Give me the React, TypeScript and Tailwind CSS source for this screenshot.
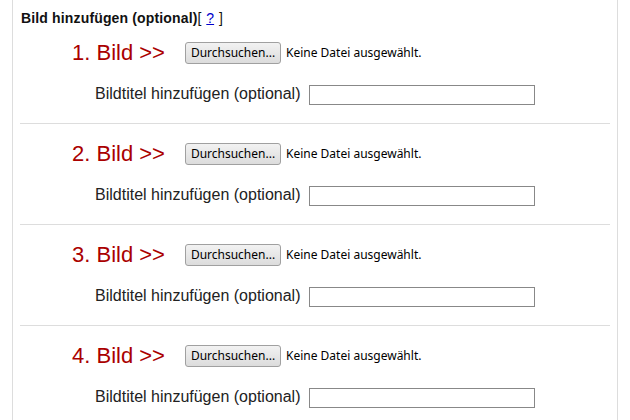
import React from "react";

function Section({ n, first }: { n: number; first?: boolean }) {
  return (
    <div className={`mx-[7px] border-b border-[#dddddd] ${first ? "pt-[18px]" : "pt-[19px]"} pb-[18px]`}>
      <div className="flex h-[22px] items-center pl-[52px]">
        <span className="w-[113px] text-[22px] leading-none text-[#aa0000]" style={{ fontFamily: "Arial, 'Liberation Sans', sans-serif" }}>
          {n}. Bild &gt;&gt;
        </span>
        <button
          type="button"
          className="h-[22px] w-[96px] rounded-[3px] border border-[#a0a0a0] bg-gradient-to-b from-[#f2f2f2] to-[#dcdcdc] text-[12px] text-black leading-none"
          style={{ fontFamily: "'Noto Sans', 'DejaVu Sans', sans-serif" }}
        >
          Durchsuchen...
        </button>
        <span className="ml-[5px] text-[12px] text-black" style={{ fontFamily: "'Noto Sans', 'DejaVu Sans', sans-serif" }}>
          Keine Datei ausgewählt.
        </span>
      </div>
      <div className="mt-[19px] flex h-[22px] items-center pl-[75px]">
        <span className="text-[16px] leading-none text-[#222222]" style={{ fontFamily: "Arial, 'Liberation Sans', sans-serif" }}>
          Bildtitel hinzufügen (optional)
        </span>
        <input type="text" className="ml-[9px] mt-[1px] h-[20px] w-[226px] border border-[#888888] bg-white" />
      </div>
    </div>
  );
}

export default function App() {
  return (
    <div className="h-[420px] w-[630px] bg-white" style={{ fontFamily: "Arial, 'Liberation Sans', sans-serif" }}>
      <div className="ml-[12px] h-[420px] w-[606px] border-x border-[#dddddd]">
        <div className="h-[24px] whitespace-nowrap pt-[10px] pl-[8px] text-[14px] leading-[16px] text-[#111111]">
          <span className="font-bold tracking-[0.15px]">Bild hinzufügen (optional)</span>
          <span>[ </span>
          <a href="#" className="mx-[1px] text-[#0000cc] underline">?</a>
          <span> ]</span>
        </div>
        <Section n={1} first />
        <Section n={2} />
        <Section n={3} />
        <Section n={4} />
      </div>
    </div>
  );
}
